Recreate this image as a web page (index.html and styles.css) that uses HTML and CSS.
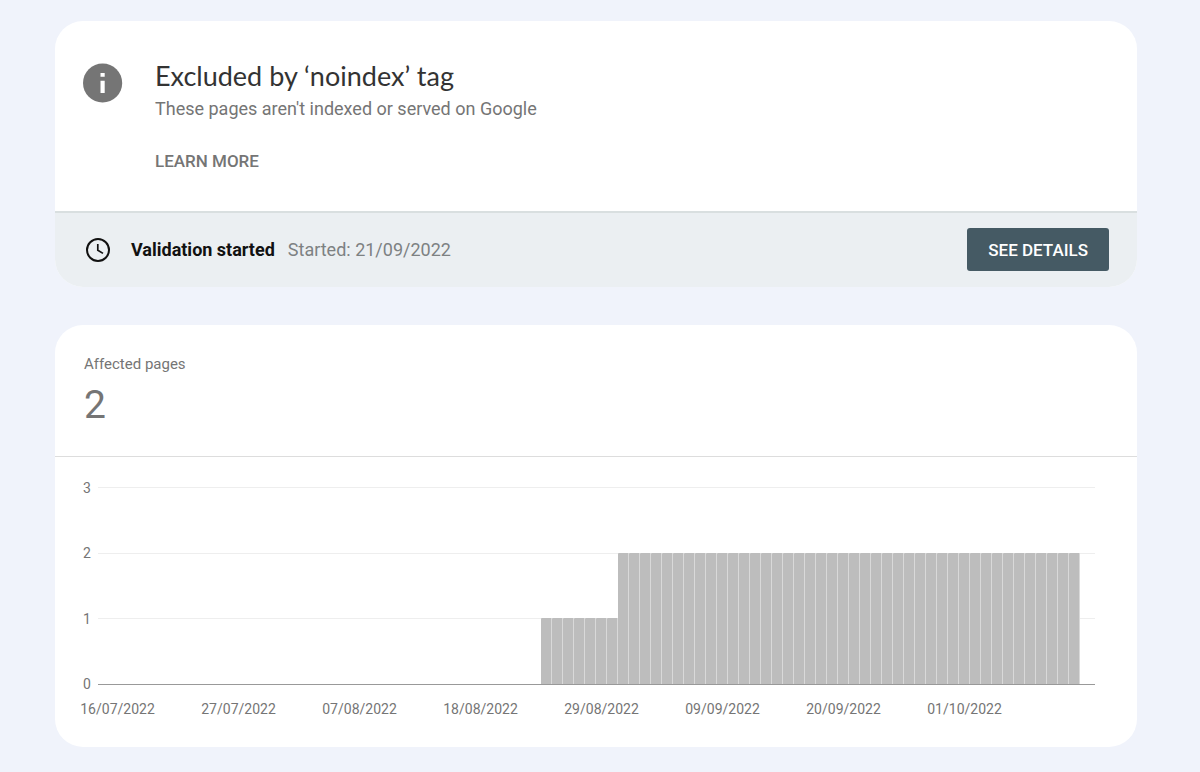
FILE: index.html
```
<!DOCTYPE html>
<html lang="en">
<head>
    <meta charset="UTF-8">
    <meta name="viewport" content="width=device-width, initial-scale=1.0">
    <title>Excluded by ‘noindex’ tag</title>
    <link rel="stylesheet" href="styles.css">
</head>
<body>
    <main>
        <!-- Issue summary -->
        <section class="card">
            <div class="issue">
                <svg class="info-icon" viewBox="0 0 40 40" aria-hidden="true">
                    <circle cx="19.6" cy="20" r="19.6" fill="#757575"/>
                    <path d="M17.5 10h4.2v3.8h-4.2zM17.5 17.8h4.2v12.2h-4.2z" fill="#fff"/>
                </svg>
                <div>
                    <h1>Excluded by ‘noindex’ tag</h1>
                    <p class="description">These pages aren't indexed or served on Google</p>
                    <a class="learn-more" href="#">LEARN MORE</a>
                </div>
            </div>
            <div class="validation">
                <svg class="clock-icon" viewBox="0 0 24 24" aria-hidden="true">
                    <circle cx="12" cy="12" r="11" fill="none" stroke="#111" stroke-width="2"/>
                    <path d="M11.8 6v6.2l5.2 3.2" fill="none" stroke="#111" stroke-width="1.7"/>
                </svg>
                <strong>Validation started</strong>
                <span class="started">Started: 21/09/2022</span>
                <button type="button" class="details">SEE DETAILS</button>
            </div>
        </section>

        <!-- Affected pages chart -->
        <section class="card">
            <div class="affected">
                <h2>Affected pages</h2>
                <p class="count">2</p>
            </div>
            <div class="chart">
                <div class="y-axis">
                    <span>3</span>
                    <span>2</span>
                    <span>1</span>
                    <span>0</span>
                </div>
                <div class="plot">
                    <div class="lines"><i></i><i></i><i></i></div>
                    <div class="bars" id="bars"></div>
                </div>
                <div class="x-axis" id="x-axis"></div>
            </div>
        </section>
    </main>
    <script>
        // Runs of days with the same number of affected pages
        const runs = [
            { days: 39, pages: 0 },
            { days: 7, pages: 1 },
            { days: 42, pages: 2 }
        ];
        const dates = ['16/07/2022', '27/07/2022', '07/08/2022', '18/08/2022',
            '29/08/2022', '09/09/2022', '20/09/2022', '01/10/2022'];
        const maxPages = 3;
        const daysPerTick = 11;

        let barsHTML = '';
        runs.forEach(run => {
            for (let i = 0; i < run.days; i++) {
                barsHTML += `<div class="bar" style="height: ${run.pages / maxPages * 100}%"></div>`;
            }
        });
        document.getElementById('bars').innerHTML = barsHTML;

        let ticksHTML = '';
        dates.forEach((date, i) => {
            ticksHTML += `<span style="grid-column: ${i * daysPerTick + 1}">${date}</span>`;
        });
        document.getElementById('x-axis').innerHTML = ticksHTML;
    </script>
</body>
</html>
```
FILE: styles.css
```
body {
    font-family: Roboto, "Liberation Sans", sans-serif;
    background-color: #f0f3fb;
    color: #757575;
    margin: 0;
}
main {
    padding: 21px 63px 25px 55px;
    display: grid;
    gap: 38px;
}
h1, h2, p {
    margin: 0;
    font-weight: 400;
}
.card {
    background-color: white;
    border-radius: 28px;
    overflow: hidden;
}
.issue {
    display: flex;
    gap: 32px;
    padding: 39px 28px 34px;
}
.info-icon {
    width: 40px;
    height: 40px;
    margin-top: 3px;
}
h1 {
    font-family: Lato, sans-serif;
    font-size: 27px;
    line-height: 32px;
    color: #333;
}
.description {
    font-size: 18px;
    line-height: 32px;
    margin: 1px 0 20px;
}
.learn-more {
    display: block;
    font-size: 17px;
    font-weight: 500;
    line-height: 32px;
    color: inherit;
    text-decoration: none;
}
.validation {
    display: flex;
    align-items: center;
    padding: 15px 28px 16px;
    background-color: #ebeff2;
    border-top: 2px solid #d9dfe0;
    font-size: 18px;
}
.clock-icon {
    width: 24px;
    height: 24px;
    margin: 0 21px 0 3px;
}
.validation strong {
    font-weight: 700;
    color: #111;
}
.started {
    margin-left: 13px;
    color: #7d8182;
}
.details {
    margin-left: auto;
    padding: 0 21px;
    height: 43px;
    font-family: inherit;
    font-size: 17px;
    font-weight: 500;
    color: white;
    background-color: #455a64;
    border: none;
    border-radius: 3px;
    cursor: pointer;
}
.affected {
    padding: 29px 29px 26px;
    border-bottom: 1px solid #ddd;
}
h2 {
    font-size: 15px;
    line-height: 20px;
}
.count {
    font-size: 39px;
    line-height: 50px;
    margin-top: 6px;
}
.chart {
    display: grid;
    grid-template-columns: 8px 1fr;
    column-gap: 7px;
    padding: 30px 42px 30px 28px;
    font-size: 14px;
    line-height: 16px;
}
.y-axis {
    display: flex;
    flex-direction: column;
    justify-content: space-between;
    margin: -7px 0;
}
.plot {
    display: grid;
    height: 198px;
    box-sizing: border-box;
    border-bottom: 1px solid #999;
}
.lines, .bars {
    grid-area: 1 / 1;
}
.lines {
    display: grid;
}
.lines i {
    border-top: 1px solid #eee;
}
.bars {
    display: flex;
    align-items: flex-end;
    padding: 0 15px 0 14px;
}
.bar {
    flex: 1;
    box-sizing: border-box;
    background-color: #bdbdbd;
    border-right: 1px solid #d9d9d9;
    border-radius: 1px 1px 0 0;
}
.x-axis {
    grid-column: 2;
    display: grid;
    grid-template-columns: repeat(88, minmax(0, 1fr));
    padding: 16px 15px 0 14px;
}
.x-axis span {
    display: flex;
    justify-content: center;
    white-space: nowrap;
}
```
